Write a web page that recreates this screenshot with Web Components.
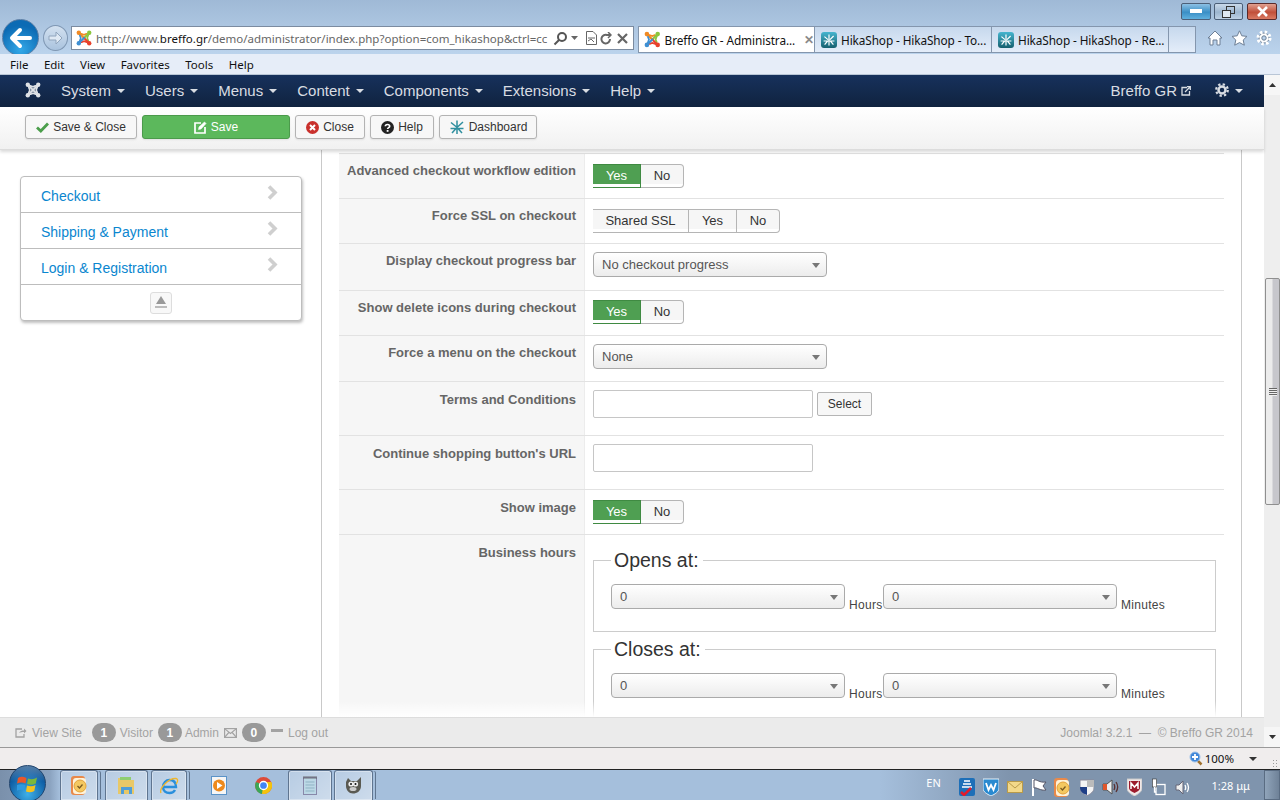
<!DOCTYPE html>
<html lang="en">
<head>
<meta charset="utf-8">
<title>Breffo GR - Administration</title>
<style>
  html, body { margin: 0; height: 100%; }
  body {
    width: 1280px; height: 800px; overflow: hidden;
    display: flex; flex-direction: column;
    font-family: "Liberation Sans", Arial, sans-serif;
  }
  .viewport { display: flex; height: 673px; flex: none; }
  .page { width: 1264px; display: flex; flex-direction: column; }
</style>
</head>
<body>
  <ie-chrome></ie-chrome>
  <div class="viewport">
    <div class="page">
      <jm-navbar></jm-navbar>
      <jm-toolbar></jm-toolbar>
      <jm-content>
        <side-menu slot="side"></side-menu>
        <form-row label="Advanced checkout workflow edition" h="46" pt="10" first><toggle-group options="Yes,No" active="Yes" widths="48,43"></toggle-group></form-row>
        <form-row label="Force SSL on checkout" h="45" pt="10"><toggle-group options="Shared SSL,Yes,No" widths="96,48,43"></toggle-group></form-row>
        <form-row label="Display checkout progress bar" h="47" pt="8"><jm-select value="No checkout progress" w="234"></jm-select></form-row>
        <form-row label="Show delete icons during checkout" h="45" pt="9"><toggle-group options="Yes,No" active="Yes" widths="48,43"></toggle-group></form-row>
        <form-row label="Force a menu on the checkout" h="46" pt="8"><jm-select value="None" w="234"></jm-select></form-row>
        <form-row label="Terms and Conditions" h="54" pt="8" lt="9"><text-field select></text-field></form-row>
        <form-row label="Continue shopping button's URL" h="54" pt="8" lt="9"><text-field></text-field></form-row>
        <form-row label="Show image" h="45" pt="10" lt="9"><toggle-group options="Yes,No" active="Yes" widths="48,43"></toggle-group></form-row>
        <form-row label="Business hours" h="200" pt="8" lt="9">
          <hours-set legend="Opens at:"></hours-set>
          <hours-set legend="Closes at:"></hours-set>
        </form-row>
      </jm-content>
      <jm-footer></jm-footer>
    </div>
    <page-scrollbar></page-scrollbar>
  </div>
  <ie-status></ie-status>
  <win-taskbar></win-taskbar>

<script>
(function() {
  'use strict';

  // four corner knobs joined by dipping edges, with a cross through the middle
  const jLogo = (size, colors) => `<svg width="${size}" height="${size}" viewBox="0 0 16 16" fill="none" stroke-linecap="round">` +
    colors.map((c, i) => `<g transform="rotate(${i * 90} 8 8)"><path stroke="${c}" stroke-width="2" d="M3 3 8 8"/><path stroke="${c}" stroke-width="1.700" d="M3 3 8 4.800 10.500 3.800"/><circle cx="2.800" cy="2.800" r="2.200" fill="${c}"/></g>`).join('') + '</svg>';
  const J_COLORS = ['#f08a24', '#8cc63f', '#e8412c', '#3f8fd2'];
  const J_WHITE = ['#dfe2e6', '#dfe2e6', '#dfe2e6', '#dfe2e6'];

  const hikaIcon = `<svg width="16" height="16" viewBox="0 0 16 16"><defs><linearGradient id="hk" x1="0" y1="0" x2="0" y2="1"><stop offset="0" stop-color="#45b5cf"/><stop offset="1" stop-color="#16606f"/></linearGradient></defs><rect width="16" height="16" rx="3" fill="url(#hk)"/><path d="M8 2.500V13.500M3.400 4.600 7 7.600M12.600 4 9 7.600M2.600 9H6.600L3.600 12.600M13.400 9H9.400L12.400 12.600" stroke="#fff" stroke-width="1.200" fill="none"/></svg>`;

  const outlookIcon = `<svg width="17" height="21" viewBox="0 0 17 21"><rect x="0" y="1" width="14" height="19" rx="3" fill="#e8894a"/><rect x="2" y="3" width="13" height="16" rx="3" fill="#fff3d8"/><circle cx="9" cy="11" r="6" fill="#f4c860" stroke="#e3a23a"/><path d="M6.500 11 8.500 13 11.500 9.500" stroke="#7a5a20" stroke-width="1.300" fill="none"/></svg>`;

  const define = (name, css, html, onConnect) => {
    customElements.define(name, class extends HTMLElement {
      connectedCallback() {
        if (this.shadowRoot) return;
        this.attachShadow({ mode: 'open' });
        const body = typeof html === 'function' ? html(this) : html;
        this.shadowRoot.innerHTML = `<style>${css}</style>${body}`;
        if (onConnect) onConnect(this);
      }
    });
  };

  // browser frame: window buttons, address bar, tabs, menu
  define('ie-chrome', `
    :host { display: block; height: 75px; background: linear-gradient(#9fb9d6, #bbd3ec 53px); font-family: "Noto Sans", sans-serif; color: #111; flex: none; }
    .winbtns { height: 26px; padding-top: 3px; box-sizing: border-box; display: flex; justify-content: flex-end; gap: 3px; padding-right: 3px; }
    .wb { height: 17px; border: 1px solid #4c5f78; border-radius: 2px; box-sizing: border-box; display: flex; align-items: center; justify-content: center; }
    .wb.min { width: 30px; background: linear-gradient(#8cc0e4, #3a8fc6 55%, #5fb0de); }
    .wb.res { width: 29px; background: linear-gradient(#c9d9ea, #9db6d0 55%, #bdd0e4); margin-right: 1px; }
    .wb.cls { width: 30px; background: linear-gradient(#e0a090, #c1503a 55%, #d97a62); border-color: #5a2a2a; }
    .nav { height: 24px; display: flex; align-items: stretch; }
    .back { width: 37px; height: 37px; border-radius: 50%; margin: -7px 0 0 2px; flex: none; background: radial-gradient(circle at 50% 85%, #33a8e8, #0c6bb4 70%); border: 1px solid #5a7ea6; box-sizing: border-box; display: flex; align-items: center; justify-content: center; }
    .fwd { width: 25px; height: 26px; border-radius: 50%; margin: -1px 0 0 4px; flex: none; background: linear-gradient(#d3e1f0, #aac3de); border: 1px solid #7f97b3; box-sizing: border-box; display: flex; align-items: center; justify-content: center; }
    .addr { width: 563px; margin-left: 3px; flex: none; background: #fff; border: 1px solid #7b8ba0; box-sizing: border-box; display: flex; align-items: center; font-size: 11.500px; color: #666; padding: 0 0 0 4px; white-space: nowrap; overflow: hidden; }
    .addr .url { margin-left: 4px; width: 452px; overflow: hidden; }
    .addr b { font-weight: 400; color: #111; }
    .addr .tools { display: flex; align-items: center; gap: 6px; margin-left: 5px; }
    .tabs { display: flex; margin-left: 4px; height: 27px; flex: none; }
    .tab { width: 177px; box-sizing: border-box; border: 1px solid #8496ad; border-left: 0; background: linear-gradient(#c6d8ed, #e4edf9); display: flex; align-items: center; padding: 0 0 0 6px; gap: 4px; font-size: 11.800px; white-space: nowrap; }
    .tab.on { background: #fff; border-left: 1px solid #8496ad; padding-left: 5px; }
    .tab.on .x { margin-left: 5px; color: #8a8a8a; font-size: 12px; font-weight: 700; }
    .tab.blank { width: 27px; }
    .tab span { letter-spacing: -.1px; }
    .rtools { display: flex; gap: 8px; margin-left: 11px; align-items: flex-start; padding-top: 4px; }
    .menu { position: relative; height: 21px; margin-top: 4px; background: #e6edf8; display: flex; align-items: center; font-size: 11.500px; padding-left: 10px; border-bottom: 1px solid #b9c6d6; box-sizing: border-box; }
    .menu span { margin-right: 15.500px; }
  `, `
    <div class="winbtns">
      <div class="wb min"><svg width="12" height="5"><rect x="0" y="0" width="12" height="4" fill="#fff"/></svg></div>
      <div class="wb res"><svg width="13" height="12" fill="none" stroke="#333"><rect x="4.500" y=".5" width="8" height="7"/><rect x=".5" y="4.500" width="8" height="7" fill="#dfe8f2"/></svg></div>
      <div class="wb cls"><svg width="13" height="11" stroke="#fff" stroke-width="2.600"><path d="M2 1 11 10M11 1 2 10"/></svg></div>
    </div>
    <div class="nav">
      <div class="back"><svg width="24" height="22" viewBox="0 0 24 22" fill="none" stroke="#fff" stroke-width="4" stroke-linecap="round" stroke-linejoin="round"><path d="M21 11H4M11 3 3 11l8 8"/></svg></div>
      <div class="fwd"><svg width="15" height="14" viewBox="0 0 15 14" fill="#dfe9f4" stroke="#90a5bd"><path d="M1 5H8V1L14 7 8 13V9H1Z"/></svg></div>
      <div class="addr">
        ${jLogo(16, J_COLORS)}
        <span class="url">http://www.<b>breffo.gr</b>/demo/administrator/index.php?option=com_hikashop&amp;ctrl=cc</span>
        <span class="tools">
          <svg width="15" height="15" viewBox="0 0 15 15" fill="none" stroke="#555" stroke-width="2"><circle cx="9" cy="6" r="4"/><path d="M6 9 1.500 13.500"/></svg>
          <svg width="7" height="4" fill="#666" style="margin-left:-3px"><path d="M0 0H7L3.500 4Z"/></svg>
          <svg width="11" height="14" viewBox="0 0 11 14" fill="none" stroke="#666" style="margin-left:2px"><path d="M.5.5H7L10.500 4V13.500H.5ZM2 7H9M2 10 5 8 8 11"/></svg>
          <svg width="12" height="13" viewBox="0 0 12 13" fill="none" stroke="#666" stroke-width="2" style="margin-left:-3px"><path d="M10 7A4.300 4.300 0 1 1 7 3H10"/><path d="M8 0 11 3 8 6" stroke-width="1.500"/></svg>
          <svg width="11" height="11" stroke="#666" stroke-width="2.200" style="margin-left:-1px"><path d="M1 1 10 10M10 1 1 10"/></svg>
        </span>
      </div>
      <div class="tabs">
        <div class="tab on">${jLogo(17, J_COLORS)}<span>Breffo GR - Administra...</span><span class="x">✕</span></div>
        <div class="tab">${hikaIcon}<span>HikaShop - HikaShop - To...</span></div>
        <div class="tab">${hikaIcon}<span>HikaShop - HikaShop - Re...</span></div>
        <div class="tab blank"></div>
      </div>
      <div class="rtools">
        <svg width="16" height="16" viewBox="0 0 16 16" fill="#fff" stroke="#6d7f95"><path d="M8 1 15 8H13V15H10V10H6V15H3V8H1Z"/></svg>
        <svg width="17" height="16" viewBox="0 0 17 16" fill="#fff" stroke="#6d7f95"><path d="M8.500 .8 10.800 5.800 16 6.400 12.200 10 13.300 15.200 8.500 12.600 3.700 15.200 4.800 10 1 6.400 6.200 5.800Z"/></svg>
        <svg width="16" height="16" viewBox="0 0 16 16" fill="none" stroke="#6d7f95"><circle cx="8" cy="8" r="5" fill="#fff" stroke-width="1"/><circle cx="8" cy="8" r="6" stroke="#fff" stroke-width="3" stroke-dasharray="2.400 2.300"/><circle cx="8" cy="8" r="2.200" fill="#bbd3ec"/></svg>
      </div>
    </div>
    <div class="menu"><span>File</span><span>Edit</span><span>View</span><span>Favorites</span><span>Tools</span><span>Help</span></div>
  `);

  // joomla top menu
  define('jm-navbar', `
    :host { display: flex; height: 32px; flex: none; align-items: center; background: linear-gradient(#17315c, #10233f); color: #d9dde3; font-size: 15px; padding: 0 0 2px 25px; box-sizing: border-box; }
    svg.logo { margin-right: 20px; }
    .m { display: flex; align-items: center; margin-right: 20px; white-space: nowrap; }
    .caret { display: inline-block; width: 0; height: 0; border: 4px solid transparent; border-top-color: #d9dde3; border-bottom: 0; margin-left: 6px; margin-top: 2px; }
    .right { margin-left: auto; display: flex; align-items: center; padding-right: 21px; }
    .right .ext { margin: 1px 0 0 4px; }
    .gear { margin-left: 24px; display: flex; align-items: center; }
  `, `
    ${jLogo(16, J_WHITE).replace('<svg', '<svg class="logo"')}
    <span class="m">System<i class="caret"></i></span>
    <span class="m">Users<i class="caret"></i></span>
    <span class="m">Menus<i class="caret"></i></span>
    <span class="m">Content<i class="caret"></i></span>
    <span class="m">Components<i class="caret"></i></span>
    <span class="m">Extensions<i class="caret"></i></span>
    <span class="m">Help<i class="caret"></i></span>
    <div class="right">
      <span>Breffo GR</span>
      <svg class="ext" width="10" height="10" viewBox="0 0 10 10" fill="none" stroke="#d9dde3" stroke-width="1.300"><path d="M6 1.500H1V9H8.500V5M4 6 9 1M6 .7H9.300V4"/></svg>
      <span class="gear">
        <svg width="14" height="14" viewBox="0 0 14 14" fill="none" stroke="#d9dde3"><circle cx="7" cy="7" r="3.500" stroke-width="2.500"/><circle cx="7" cy="7" r="5.800" stroke-width="2.200" stroke-dasharray="2.300 2.250"/></svg>
        <i class="caret"></i>
      </span>
    </div>
  `);

  define('tool-btn', `
    :host { display: flex; align-items: center; justify-content: center; gap: 4px; height: 24px; box-sizing: border-box; border: 1px solid #b3b3b3; border-radius: 3px; background: #f7f7f7; color: #333; font-size: 12px; box-shadow: 0 1px 2px rgba(0,0,0,.08); white-space: nowrap; }
    :host([primary]) { background: #5cb85c; border-color: #4b9a4b; color: #fff; }
  `, `<slot></slot>`);

  define('jm-toolbar', `
    :host { display: flex; height: 43px; flex: none; gap: 5px; padding: 8px 0 0 25px; box-sizing: border-box; background: linear-gradient(#fff, #f1f1f1); border-bottom: 1px solid #dcdcdc; box-shadow: 0 2px 3px rgba(0,0,0,.15); position: relative; z-index: 2; }
  `, `
    <tool-btn style="width:112px"><svg width="13" height="11" viewBox="0 0 13 11" fill="none" stroke="#4b9e4b" stroke-width="2.800"><path d="M1 5.500 4.800 9 12 1.500"/></svg>Save &amp; Close</tool-btn>
    <tool-btn primary style="width:148px"><svg width="13" height="13" viewBox="0 0 13 13" fill="none" stroke="#fff" stroke-width="1.700"><path d="M7 2H1V12H11V6"/><path d="M4.500 8.500 5 6 10.500 1 12 2.500 7 8Z" fill="#fff" stroke-width=".6"/></svg>Save</tool-btn>
    <tool-btn style="width:70px"><svg width="13" height="13" viewBox="0 0 13 13"><circle cx="6.500" cy="6.500" r="6.500" fill="#c9302c"/><path d="M4 4 9 9M9 4 4 9" stroke="#fff" stroke-width="2"/></svg>Close</tool-btn>
    <tool-btn style="width:64px"><svg width="13" height="13" viewBox="0 0 13 13"><circle cx="6.500" cy="6.500" r="6.500" fill="#222"/><path d="M4.300 5.200C4.400 2.800 8.700 2.900 8.700 5.200 8.700 6.700 6.600 6.600 6.600 8" fill="none" stroke="#fff" stroke-width="1.600"/><rect x="5.700" y="9" width="1.800" height="1.800" fill="#fff"/></svg>Help</tool-btn>
    <tool-btn style="width:98px"><svg width="16" height="16" viewBox="0 0 16 16" fill="none" stroke="#2f8f9f" stroke-width="1.500"><path d="M8 1.500V15M2 3.500 7.500 8M14 3 8.500 8M1.500 9.500H7L3 14M14.500 9.500H9L13 14"/></svg>Dashboard</tool-btn>
  `);

  // two columns under the toolbar: the accordion and the form
  define('jm-content', `
    :host { display: flex; height: 567px; flex: none; overflow: hidden; background: #fff; position: relative; }
    .side { flex: none; box-sizing: border-box; width: 322px; border-right: 1px solid #c9c9c9; padding: 26px 0 0 20px; }
    .form { width: 920px; flex: none; box-sizing: border-box; border-right: 1px solid #c9c9c9; padding: 3px 17px 0; }
    .fade { position: absolute; left: 322px; right: 23px; bottom: 0; height: 16px; background: linear-gradient(rgba(255,255,255,0), #fff); }
  `, `
    <div class="side"><slot name="side"></slot></div>
    <div class="form"><slot></slot></div>
    <div class="fade"></div>
  `);

  define('side-menu', `
    :host { display: block; width: 282px; box-sizing: border-box; border: 1px solid #bdbdbd; border-radius: 4px; box-shadow: 1px 2px 3px rgba(0,0,0,.25); background: #fff; }
    .it { height: 36px; box-sizing: border-box; border-bottom: 1px solid #bdbdbd; display: flex; align-items: center; justify-content: space-between; padding: 2px 23px 0 20px; color: #0a86cf; font-size: 14px; }
    .it svg { margin-top: -6px; }
    .foot { height: 35px; display: flex; align-items: center; justify-content: center; }
    .up { width: 22px; height: 22px; box-sizing: border-box; border: 1px solid #ddd; border-radius: 3px; display: flex; align-items: center; justify-content: center; background: #f8f8f8; }
  `, () => ['Checkout', 'Shipping &amp; Payment', 'Login &amp; Registration'].map(t =>
    `<div class="it">${t}<svg width="11" height="15" viewBox="0 0 11 15" fill="none" stroke="#cfcfcf" stroke-width="3.600"><path d="M2 1.500 8 7.500 2 13.500"/></svg></div>`).join('') +
    `<div class="foot"><div class="up"><svg width="14" height="13" viewBox="0 0 14 13" fill="#999"><path d="M7 0 12 8H2Z"/><rect x="1" y="10" width="12" height="2" fill="#bbb"/></svg></div></div>`);

  define('form-row', `
    :host { display: grid; grid-template-columns: 246px 1fr; box-sizing: border-box; border-bottom: 1px solid #e2e2e2; }
    :host([first]) { border-top: 1px solid #e2e2e2; }
    .lbl { background: #f6f6f6; border-right: 1px solid #ececec; padding: 8px 8px 0 0; text-align: right; font-weight: 700; font-size: 13px; line-height: 18px; color: #666; }
    .ctl { padding-left: 8px; }
  `, el => {
    el.style.height = el.getAttribute('h') + 'px';
    return `<div class="lbl" style="padding-top:${el.getAttribute('lt') || 8}px">${el.getAttribute('label')}</div>
      <div class="ctl" style="padding-top:${el.getAttribute('pt')}px"><slot></slot></div>`;
  });

  define('toggle-group', `
    :host { display: inline-flex; height: 24px; }
    .b { box-sizing: border-box; border: 1px solid #b5b5b5; border-left: 0; padding-bottom: 2px; display: flex; align-items: center; justify-content: center; font-size: 13px; color: #333; background: linear-gradient(#f6f6f6 85%, #fff 85%); }
    .b:first-child { border-left: 1px solid #b5b5b5; border-radius: 4px 0 0 4px; }
    .b:last-child { border-radius: 0 4px 4px 0; }
    .b.on { background: linear-gradient(#4f9f52 88%, #fff 88%); color: #fff; border-color: #3f8a42; }
  `, el => {
    const w = el.getAttribute('widths').split(',');
    return el.getAttribute('options').split(',').map((o, i) =>
      `<div class="b${o === el.getAttribute('active') ? ' on' : ''}" style="width:${w[i]}px">${o}</div>`).join('');
  });

  define('jm-select', `
    :host { display: flex; height: 25px; box-sizing: border-box; align-items: center; justify-content: space-between; border: 1px solid #aaa; border-radius: 4px; background: linear-gradient(#fff, #ececec); font-size: 13px; color: #555; padding: 0 6px 0 8px; flex: none; }
    i { width: 0; height: 0; border: 4.500px solid transparent; border-top: 5px solid #777; border-bottom: 0; margin-top: 1px; }
  `, el => {
    el.style.width = el.getAttribute('w') + 'px';
    return `<span>${el.getAttribute('value')}</span><i></i>`;
  });

  define('text-field', `
    :host { display: flex; gap: 4px; align-items: center; height: 28px; }
    input { width: 220px; height: 28px; box-sizing: border-box; border: 1px solid #c6c6c6; border-radius: 2px; padding: 0 6px; margin: 0; background: #fff; }
    .sel { width: 55px; height: 24px; box-sizing: border-box; border: 1px solid #b5b5b5; border-radius: 2px; background: #f7f7f7; display: flex; align-items: center; justify-content: center; font-size: 12px; color: #333; }
  `, el => `<input type="text">${el.hasAttribute('select') ? '<div class="sel">Select</div>' : ''}`);

  define('hours-set', `
    :host { display: block; width: 623px; margin: 5px 0 0; }
    fieldset { margin: 0; padding: 12px 0 19px 17px; border: 1px solid #ccc; min-inline-size: 0; }
    legend { padding: 0 4px 0 3px; font-size: 19.500px; line-height: 24px; color: #333; }
    .r { display: flex; }
    span { font-size: 12px; color: #444; margin: 14px 0 0 4px; line-height: 14px; letter-spacing: .3px; }
    span.h { width: 34px; }
  `, el => `<fieldset><legend>${el.getAttribute('legend')}</legend><div class="r">
      <jm-select value="0" w="234"></jm-select><span class="h">Hours</span><jm-select value="0" w="234"></jm-select><span>Minutes</span>
    </div></fieldset>`);

  define('jm-footer', `
    :host { display: flex; height: 31px; flex: none; box-sizing: border-box; align-items: center; background: #ebebeb; border-top: 1px solid #ddd; border-bottom: 1px solid #999; color: #a3a3a3; font-size: 12px; padding: 0 11px 0 15px; white-space: nowrap; }
    .badge { display: inline-flex; width: 24px; height: 19px; border-radius: 10px; background: #999; color: #fff; font-weight: 700; align-items: center; justify-content: center; }
    .i { display: flex; }
    .end { margin-left: auto; }
  `, `
    <svg class="i" width="12" height="11" viewBox="0 0 12 11" fill="none" stroke="#a3a3a3" stroke-width="1.300" style="margin-right:5px"><path d="M7 2H1V10H9V7"/><path d="M4 6 C5 4 7 3.500 9 3.500V1.500L11.500 4 9 6.500V5C7 5 5.500 5 4 6Z" fill="#a3a3a3" stroke="none"/></svg>
    <span style="margin-right:10px">View Site</span>
    <span class="badge" style="margin-right:4px">1</span><span style="margin-right:5px">Visitor</span>
    <span class="badge" style="margin-right:3px">1</span><span style="margin-right:5px">Admin</span>
    <svg class="i" width="13" height="10" viewBox="0 0 13 10" fill="none" stroke="#a3a3a3" stroke-width="1.200" style="margin-right:5px"><rect x=".6" y=".6" width="11.800" height="8.800"/><path d="M.6.6 6.500 5.500 12.400.6M.6 9.400 4.800 4.500M12.400 9.400 8.200 4.500"/></svg>
    <span class="badge" style="margin-right:5px">0</span>
    <svg class="i" width="12" height="3" style="margin:-4px 5px 0 0"><rect width="12" height="3" fill="#a3a3a3"/></svg>
    <span>Log out</span>
    <span class="end">Joomla! 3.2.1 &nbsp;— &nbsp;© Breffo GR 2014</span>
  `);

  define('page-scrollbar', `
    :host { display: flex; flex-direction: column; width: 16px; flex: none; background: #eee; box-sizing: border-box; border-bottom: 1px solid #999; }
    .a { height: 20px; flex: none; display: flex; align-items: center; justify-content: center; background: #f6f6f6; }
    .track { flex: 1; padding-top: 183px; }
    .thumb { width: 15px; height: 227px; margin-left: 1px; box-sizing: border-box; border: 1px solid #8f8f8f; border-radius: 2px; background: linear-gradient(90deg, #ececec 0 45%, #c7c7cc 55%); display: flex; align-items: center; justify-content: center; }
    .grip { width: 8px; height: 8px; background: repeating-linear-gradient(#666 0 1px, #eee 1px 2px); }
  `, `
    <div class="a"><svg width="7" height="4" fill="#333"><path d="M3.500 0 7 4H0Z"/></svg></div>
    <div class="track"><div class="thumb"><div class="grip"></div></div></div>
    <div class="a"><svg width="7" height="4" fill="#333"><path d="M0 0H7L3.500 4Z"/></svg></div>
  `);

  define('ie-status', `
    :host { display: flex; height: 22px; flex: none; align-items: center; justify-content: flex-end; background: #f0eded; border-bottom: 1px solid #222; box-sizing: border-box; font-family: "Noto Sans", sans-serif; font-size: 11.500px; color: #111; padding-right: 2px; }
    i { width: 0; height: 0; border: 4px solid transparent; border-top: 4px solid #333; border-bottom: 0; margin: 0 15px; }
    .grip { width: 6px; height: 8px; margin-top: 8px; background: radial-gradient(circle, #999 35%, transparent 40%) 0 0 / 3px 3px; }
  `, `
    <svg width="14" height="15" viewBox="0 0 14 15" style="margin-right:2px"><path d="M8.500 9.500 12.500 13.500" stroke="#a0702e" stroke-width="2.500"/><circle cx="6" cy="6" r="5" fill="#3f86d8" stroke="#9cc0e8"/><path d="M6 3V9M3 6H9" stroke="#fff" stroke-width="1.800"/></svg>
    <span>100%</span><i></i><div class="grip"></div>
  `);

  define('task-btn', `
    :host { display: flex; flex: none; align-items: center; justify-content: center; height: 30px; box-sizing: border-box; }
    :host([glass]) { border: 1px solid #5f7590; border-bottom: 0; border-radius: 3px 3px 0 0; background: linear-gradient(135deg, rgba(255,255,255,.2), rgba(255,255,255,.45)); box-shadow: inset 0 0 0 1px rgba(255,255,255,.35); }
    :host([stack]) { box-shadow: inset 0 0 0 1px rgba(255,255,255,.35), 3px 0 0 -1px #a5bfdc, 4px 0 0 -1px #5f7590; }
  `, `<slot></slot>`);

  define('win-taskbar', `
    :host { display: flex; height: 30px; flex: none; position: relative; box-sizing: border-box; background: linear-gradient(90deg, #7a90ab 0, #8ba3c0 50px, #a5bfdc 60px, #a5bfdc 880px, #7f94ad 1010px, #7f94ad); font-family: "Noto Sans", sans-serif; color: #fff; padding-left: 60px; }
    .orb { position: absolute; left: 9px; top: -5px; width: 37px; height: 37px; border-radius: 50%; background: linear-gradient(rgba(255,255,255,.3), rgba(255,255,255,0) 45%), radial-gradient(circle at 50% 80%, #3fb0e8, #0f5fa6 60%, #0a3566); border: 1px solid #21456e; box-sizing: border-box; display: flex; align-items: center; justify-content: center; }
    .tray { margin-left: auto; display: flex; align-items: center; }
    .en { font-size: 11px; width: 20px; margin: -5px 11px 0 0; text-align: center; }
    .t { width: 24px; display: flex; align-items: center; justify-content: center; margin-top: 4px; }
    .time { font-size: 11px; margin: 1px 14px 0 17px; white-space: nowrap; }
    .desk { width: 16px; height: 30px; box-sizing: border-box; border: 1px solid #5a6c82; background: linear-gradient(90deg, #90a4ba, #6f8298); }
  `, `
    <div class="orb"><svg width="21" height="20" viewBox="0 0 21 20"><path d="M1 4C4 2 6.500 3 9.500 4L8.500 9.500C6 8.500 3.500 8 0 9.500Z" fill="#e9572b"/><path d="M11 4.500C14 5.500 17 5.500 20 3.500L18.800 9.500C16 11 13.500 11 10 10Z" fill="#7cb83c"/><path d="M0 11C3 9.700 5.500 10 8.300 11L7.300 16.500C4.500 15.300 2.500 15.500 -.5 17Z" fill="#2f9ae0"/><path d="M10 11.500C13 12.500 15.500 12.500 18.500 11L17.300 17C14.500 18.500 12 18.500 9 17.500Z" fill="#f4c21f"/></svg></div>
    <task-btn glass stack style="width:38px">${outlookIcon}</task-btn>
    <task-btn glass style="width:43px;margin-left:7px"><svg width="17" height="19" viewBox="0 0 17 19"><path d="M0 2H6L8 4H16V18H0Z" fill="#e8c868"/><rect x="2" y="1" width="11" height="3" fill="#8fce70"/><path d="M3 18V11H14V18H11V14H6V18Z" fill="#4f9ed8"/></svg></task-btn>
    <task-btn glass stack style="width:36px;margin-left:3px"><svg width="20" height="20" viewBox="0 0 20 20" fill="none"><path d="M4 11H17C17 6 14 4 10.500 4 7 4 4 7 4 11S7 17 10.500 17C13 17 15 16 16 14" stroke="#2a8fdc" stroke-width="2.400"/><path d="M2 17C0 13 9 2 17 2.500 20 3 18 7 17 8" stroke="#f0b62c" stroke-width="1.300"/></svg></task-btn>
    <task-btn style="width:45px;margin-left:9px"><svg width="16" height="19" viewBox="0 0 16 19"><rect x=".5" y=".5" width="15" height="18" fill="#f6f6f6" stroke="#5b93c8"/><circle cx="8" cy="9.500" r="6" fill="#ee8a1d"/><path d="M6 6 11.500 9.500 6 13Z" fill="#fff"/></svg></task-btn>
    <task-btn style="width:45px"><svg width="17" height="17" viewBox="0 0 17 17"><circle cx="8.500" cy="8.500" r="8.500" fill="#dd4b39"/><path d="M1 5A8.500 8.500 0 0 0 7 16.900L11 9Z" fill="#3aa757"/><path d="M8.500 5H16.300A8.500 8.500 0 0 1 7 16.900Z" fill="#f4c20d"/><circle cx="8.500" cy="8.500" r="4" fill="#4285f4" stroke="#fff" stroke-width="1.300"/></svg></task-btn>
    <task-btn glass style="width:44px;margin-left:2px"><svg width="15" height="19" viewBox="0 0 15 19"><rect x=".5" y="1.500" width="13" height="17" fill="#bcd8e6" stroke="#88a"/><path d="M1 0V3M3 0V3M5 0V3M7 0V3M9 0V3M11 0V3M13 0V3" stroke="#555" stroke-width=".8"/><path d="M2.500 6H11.500M2.500 9H11.500M2.500 12H11.500M2.500 15H11.500" stroke="#8fb3c4"/></svg></task-btn>
    <task-btn glass stack style="width:39px;margin-left:2px"><svg width="18" height="17" viewBox="0 0 18 17"><path d="M1 5 3 1 6 4H12L16 0V9C16 14 12 16.500 8 16.500S1 13 1 9Z" fill="#5a5a52"/><circle cx="6" cy="7" r="2.600" fill="#eee"/><circle cx="10.500" cy="7" r="2.600" fill="#eee"/><circle cx="6" cy="7" r="1" fill="#111"/><circle cx="10.500" cy="7" r="1" fill="#111"/><ellipse cx="8" cy="12" rx="3.500" ry="2" fill="#ccc"/></svg></task-btn>
    <div class="tray">
      <span class="en">EN</span>
      <span class="t"><svg width="16" height="18" viewBox="0 0 16 18"><rect width="16" height="18" rx="2" fill="#1d6fb8"/><path d="M5 3H11M4 6H12M3 9H13" stroke="#fff" stroke-width="1.300"/><path d="M2 14 5 17 12 10" stroke="#e31c2a" stroke-width="2.600" fill="none"/></svg></span>
      <span class="t"><svg width="16" height="18" viewBox="0 0 16 18"><path d="M0 1H16V10C16 14 12 16 8 18 4 16 0 14 0 10Z" fill="#2a8ad0" stroke="#e6f0f8"/><path d="M3 5 5.500 12 8 7 10.500 12 13 5" stroke="#fff" stroke-width="1.800" fill="none"/></svg></span>
      <span class="t"><svg width="16" height="12" viewBox="0 0 16 12"><rect x=".5" y=".5" width="15" height="11" fill="#f3d98a" stroke="#b89a4a"/><path d="M.5.500 8 7 15.500.5" stroke="#b89a4a" fill="none"/></svg></span>
      <span class="t"><svg width="16" height="18" viewBox="0 0 16 18"><path d="M2 1V18" stroke="#fff" stroke-width="2"/><path d="M3 2C6 1 8 5 15 4L12 8 15 12C9 13 6 9 3 10Z" fill="#fff" stroke="#556"/></svg></span>
      <span class="t">${outlookIcon}</span>
      <span class="t"><svg width="14" height="17" viewBox="0 0 14 17"><path d="M0 1H14V9C14 13 10 15 7 17 4 15 0 13 0 9Z" fill="#f4f4f4" stroke="#889"/><path d="M7 1H14V8H7Z" fill="#bbb"/><path d="M0 8H7V16C4 15 0 13 0 9Z" fill="#1f3f86"/></svg></span>
      <span class="t"><svg width="18" height="18" viewBox="0 0 18 18"><path d="M1 6H5L10 2V16L5 12H1Z" fill="#eee" stroke="#555"/><path d="M1 6H5V12H1Z" fill="#e0562c"/><path d="M12 6C13 8 13 10 12 12M14 4C16 7 16 11 14 14" stroke="#5a3030" stroke-width="1.300" fill="none"/></svg></span>
      <span class="t"><svg width="15" height="18" viewBox="0 0 15 18"><path d="M0 1H15V10C15 14 11 16 7.500 18 4 16 0 14 0 10Z" fill="#f0e8e8" stroke="#c9c9c9"/><path d="M2 3H13V10C13 12 10 14 7.500 15 5 14 2 12 2 10Z" fill="#9c1b2c"/><path d="M4 11V5L7.500 9 11 5V11" stroke="#fff" stroke-width="1.500" fill="none"/></svg></span>
      <span class="t"><svg width="15" height="18" viewBox="0 0 15 18" fill="none" stroke="#fff"><rect x="5" y="6.500" width="9" height="10" stroke-width="1.300"/><rect x="1.500" y="1" width="4" height="8" fill="#fff" stroke="#333" stroke-width=".6"/><path d="M3.500 9V14H5" stroke-width="1.300"/></svg></span>
      <span class="t"><svg width="15" height="17" viewBox="0 0 15 17"><path d="M1 6H4L8 2V15L4 11H1Z" fill="#eee" stroke="#667"/><path d="M10 6C11 8 11 9.500 10 11M12 4C14 7 14 10 12 13" stroke="#fff" fill="none" stroke-width="1.300"/></svg></span>
      <span class="time">1:28 μμ</span>
      <div class="desk"></div>
    </div>
  `);
})();
</script>
</body>
</html>
